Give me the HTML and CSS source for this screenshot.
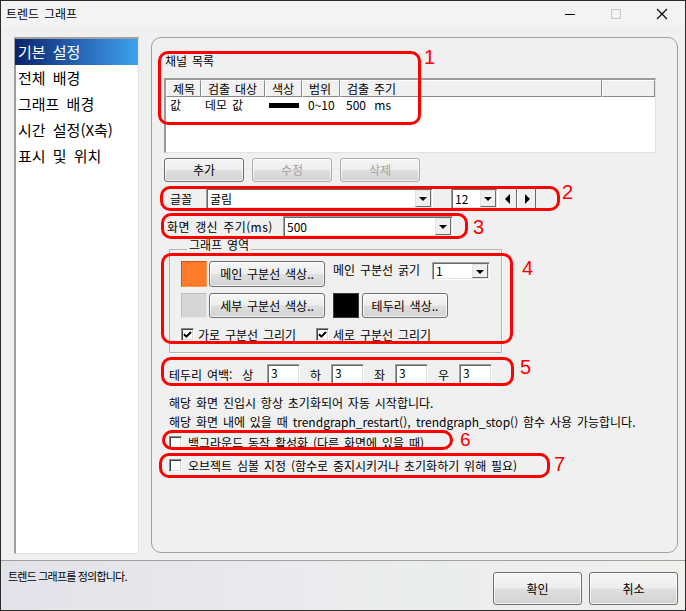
FILE: index.html
```html
<!DOCTYPE html>
<html lang="ko">
<head>
<meta charset="utf-8">
<title>트렌드 그래프</title>
<link rel="stylesheet" href="styles.css">
</head>
<body>
<div class="window">
  <div class="titlebar">
    <span class="title">트렌드 그래프</span>
    <div class="controls">
      <svg class="ctl" width="46" height="25" viewBox="0 0 46 25"><line x1="18" y1="13.5" x2="28" y2="13.5" stroke="#000" stroke-width="1"/></svg>
      <svg class="ctl" width="46" height="25" viewBox="0 0 46 25"><rect x="18.5" y="8.5" width="9" height="9" fill="none" stroke="#c6c6c6" stroke-width="1"/></svg>
      <svg class="ctl" width="46" height="25" viewBox="0 0 46 25"><path d="M18 8 L28 18 M28 8 L18 18" stroke="#000" stroke-width="1.1" fill="none"/></svg>
    </div>
  </div>

  <div class="main">
    <ul class="nav">
      <li class="sel">기본 설정</li>
      <li>전체 배경</li>
      <li>그래프 배경</li>
      <li>시간 설정(X축)</li>
      <li>표시 및 위치</li>
    </ul>

    <div class="panel">
      <div class="section-label">채널 목록</div>
      <div class="listview">
        <div class="lv-head">
          <span class="col c1">제목</span>
          <span class="col c2">검출 대상</span>
          <span class="col c3">색상</span>
          <span class="col c4">범위</span>
          <span class="col c5">검출 주기</span>
          <span class="col c6"></span>
        </div>
        <div class="lv-row">
          <span class="cell c1">값</span>
          <span class="cell c2">데모 값</span>
          <span class="cell c3"><span class="colorbar"></span></span>
          <span class="cell c4 pad2">0~10</span>
          <span class="cell c5 pad2 wide">500 ms</span>
        </div>
      </div>

      <div class="btnrow">
        <button class="btn w80">추가</button>
        <button class="btn w80 disabled">수정</button>
        <button class="btn w80 disabled">삭제</button>
      </div>

      <div class="row row-font">
        <span class="lbl-font">글꼴</span>
        <div class="combo w-font"><span class="combo-text">굴림</span><span class="dd"><i class="tri-down"></i></span></div>
        <div class="combo w-size"><span class="combo-text">12</span><span class="dd"><i class="tri-down"></i></span></div>
        <span class="spin"><i class="tri-left"></i></span>
        <span class="spin"><i class="tri-right"></i></span>
      </div>

      <div class="row row-refresh">
        <span class="lbl-refresh">화면 갱신 주기(ms)</span>
        <div class="combo w-refresh"><span class="combo-text">500</span><span class="dd"><i class="tri-down"></i></span></div>
      </div>

      <fieldset class="group">
        <legend>그래프 영역</legend>
        <div class="g-row g-row1">
          <span class="swatch orange"></span>
          <button class="btn w116 h26">메인 구분선 색상..</button>
          <span class="lbl-thick">메인 구분선 굵기</span>
          <div class="combo w-thick"><span class="combo-text">1</span><span class="dd"><i class="tri-down"></i></span></div>
        </div>
        <div class="g-row g-row2">
          <span class="swatch gray"></span>
          <button class="btn w116 h25">세부 구분선 색상..</button>
          <span class="swatch black"></span>
          <button class="btn w86 h25">테두리 색상..</button>
        </div>
        <div class="g-row g-row3">
          <label class="check"><span class="cb"><svg width="9" height="9" viewBox="0 0 9 9"><path d="M1 4.2 L3.4 6.6 L8 2" stroke="#000" stroke-width="2" fill="none"/></svg></span>가로 구분선 그리기</label>
          <label class="check check2"><span class="cb"><svg width="9" height="9" viewBox="0 0 9 9"><path d="M1 4.2 L3.4 6.6 L8 2" stroke="#000" stroke-width="2" fill="none"/></svg></span>세로 구분선 그리기</label>
        </div>
      </fieldset>

      <div class="row row-margin">
        <span class="lbl-margin">테두리 여백:&nbsp; 상</span>
        <span class="input">3</span>
        <span class="lbl-side">하</span>
        <span class="input">3</span>
        <span class="lbl-side">좌</span>
        <span class="input">3</span>
        <span class="lbl-side">우</span>
        <span class="input">3</span>
      </div>

      <p class="note">해당 화면 진입시 항상 초기화되어 자동 시작합니다.</p>
      <p class="note">해당 화면 내에 있을 때 <span class="code">trendgraph_restart(), trendgraph_stop()</span> 함수 사용 가능합니다.</p>

      <label class="check row-check"><span class="cb"></span>백그라운드 동작 활성화 (다른 화면에 있을 때)</label>
      <label class="check row-check"><span class="cb"></span>오브젝트 심볼 지정 (함수로 중지시키거나 초기화하기 위해 필요)</label>

      <!-- annotation overlays -->
      <div class="mark m1"></div><span class="num n1">1</span>
      <div class="mark m2"></div><span class="num n2">2</span>
      <div class="mark m3"></div><span class="num n3">3</span>
      <div class="mark m4"></div><span class="num n4">4</span>
      <div class="mark m5"></div><span class="num n5">5</span>
      <div class="mark m6"></div><span class="num n6">6</span>
      <div class="mark m7"></div><span class="num n7">7</span>
    </div>
  </div>

  <div class="statusbar">
    <span class="status-text">트렌드 그래프를 정의합니다.</span>
    <div class="dlg-buttons">
      <button class="btn dlg">확인</button>
      <button class="btn dlg">취소</button>
    </div>
  </div>
</div>
</body>
</html>
```

FILE: styles.css
```css
* { box-sizing: border-box; }
html, body { margin: 0; padding: 0; background: #ffffff; }
body {
  font-family: "Noto Sans CJK KR", "Noto Sans", "Liberation Sans", sans-serif;
  font-size: 12px;
  color: #000;
  word-spacing: 1.5px;
}

.window {
  width: 686px;
  height: 611px;
  border: 1px solid #2b2b2b;
  background: #f0f0f0;
  display: flex;
  flex-direction: column;
  overflow: hidden;
}

/* title bar */
.titlebar {
  height: 25px;
  flex: none;
  display: flex;
  align-items: center;
  justify-content: space-between;
  background: #f3f3f3;
  padding-left: 5px;
}
.title { font-size: 12px; line-height: 14px; }
.controls { display: flex; }
.ctl { display: block; }

/* main area */
.main {
  height: 534px;
  flex: none;
  display: flex;
  align-items: flex-start;
  gap: 12px;
  padding: 11px 0 0 13px;
}

.nav {
  list-style: none;
  margin: 0;
  padding: 0;
  width: 125px;
  height: 517px;
  background: #fff;
  border-style: solid;
  border-width: 2px 1px 1px 2px;
  border-color: #a0a0a0 #e3e3e3 #e3e3e3 #a0a0a0;
}
.nav li {
  height: 26px;
  line-height: 26px;
  font-size: 15px;
  padding-left: 2px;
  white-space: nowrap;
  word-spacing: 3px;
}
.nav li.sel {
  margin-left: -1px;
  padding-left: 3px;
  background: linear-gradient(to right, #0a246a, #2a6fc0 60%, #3fa2ec);
  color: #fff;
}

.panel {
  position: relative;
  width: 527px;
  height: 516px;
  border: 1px solid #a0a0a0;
  border-radius: 10px;
  padding: 15px 0 0 12px;
}

.section-label { line-height: 16px; height: 16px; padding-left: 1px; }

/* list view */
.listview {
  margin-top: 9px;
  width: 492px;
  height: 75px;
  background: #fff;
  border-style: solid;
  border-width: 2px 1px 1px 2px;
  border-color: #9a9a9a #e3e3e3 #e3e3e3 #9a9a9a;
}
.lv-head { display: flex; height: 17px; }
.col {
  display: block;
  height: 17px;
  line-height: 15px;
  padding-left: 6px;
  background: #f0f0f0;
  border-style: solid;
  border-width: 1px;
  border-color: #ffffff #8a8a8a #8a8a8a #ffffff;
  white-space: nowrap;
}
.c1 { width: 35px; }
.c2 { width: 64px; }
.c3 { width: 37px; }
.c4 { width: 38px; }
.c5 { width: 262px; }
.c6 { flex: 1; }
.lv-row { display: flex; height: 16px; line-height: 16px; margin-top: 0; }
.cell { display: block; padding-left: 4px; white-space: nowrap; }
.cell.pad2 { padding-left: 6px; }
.cell.wide { word-spacing: 5px; }
.colorbar {
  display: inline-block;
  width: 30px;
  height: 5px;
  background: #000;
  vertical-align: middle;
  margin-top: -2px;
}

/* buttons */
.btn {
  font-family: inherit;
  font-size: 12px;
  word-spacing: 1.5px;
  color: #000;
  padding: 0;
  border: 1px solid #707070;
  border-radius: 3px;
  background: linear-gradient(#f6f6f6 0%, #ededed 48%, #dfdfdf 52%, #d2d2d2 100%);
  box-shadow: inset 0 0 0 1px rgba(255,255,255,0.7);
  line-height: 14px;
}
.btn.disabled { color: #a3a3a3; border-color: #adadad; }
.w80 { width: 80px; height: 24px; }
.w116 { width: 116px; }
.w86 { width: 86px; }
.h26 { height: 26px; }
.h25 { height: 25px; }

.btnrow { display: flex; gap: 8px; margin-top: 5px; }

/* rows */
.row { display: flex; align-items: center; }

.row-font { margin-top: 6px; height: 21px; }
.lbl-font { width: 42px; padding-left: 6px; }
.row-refresh { margin-top: 7px; height: 21px; }
.lbl-refresh { width: 119px; padding-left: 3px; white-space: nowrap; letter-spacing: 0.4px; }

/* combo box */
.combo {
  height: 21px;
  display: flex;
  align-items: center;
  justify-content: space-between;
  background: #fff;
  border-style: solid;
  border-width: 1px;
  border-color: #a0a0a0 #ffffff #ffffff #a0a0a0;
  box-shadow: inset 1px 1px 0 #696969, inset -1px -1px 0 #e3e3e3;
  padding: 1px 1px 1px 3px;
}
.combo-text { line-height: 14px; }
.dd {
  width: 16px;
  height: 17px;
  background: #f0f0f0;
  border-style: solid;
  border-width: 1px;
  border-color: #e3e3e3 #696969 #696969 #e3e3e3;
  display: flex;
  align-items: center;
  justify-content: center;
}
.tri-down {
  display: block;
  width: 0; height: 0;
  border-left: 4px solid transparent;
  border-right: 4px solid transparent;
  border-top: 4px solid #000;
  margin-top: 1px;
}
.w-font { width: 227px; }
.w-size { width: 47px; margin-left: 18px; }
.w-refresh { width: 170px; }
.w-thick { width: 58px; height: 18px; padding-top: 0; padding-bottom: 0; }
.w-thick .dd { height: 14px; }

.spin {
  width: 19px;
  height: 21px;
  background: #f0f0f0;
  border-style: solid;
  border-width: 1px;
  border-color: #ffffff #696969 #696969 #ffffff;
  display: flex;
  align-items: center;
  justify-content: center;
}
.spin:first-of-type { margin-left: 3px; }
.tri-left, .tri-right { display: block; width: 0; height: 0; border-top: 5px solid transparent; border-bottom: 5px solid transparent; }
.tri-left { border-right: 5px solid #000; }
.tri-right { border-left: 5px solid #000; margin-left: 1px; }

/* group box */
.group {
  margin: 2px 0 0 5px;
  width: 333px;
  padding: 0 0 11px 11px;
  border: 1px solid #b4b4b4;
  box-shadow: 1px 1px 0 #ffffff;
  min-width: 0;
}
.group legend {
  padding: 0 2px 8px 2px;
  margin-left: 6px;
  line-height: 12px;
  font-size: 12px;
}
.g-row { display: flex; align-items: center; }
.g-row1 { margin-top: 2px; align-items: flex-start; }
.g-row2 { margin-top: 6px; }
.g-row3 { margin-top: 10px; height: 13px; }

.swatch { display: block; width: 26px; border-style: solid; border-width: 1px; }
.swatch.orange { height: 26px; background: #ff7b2b; border-color: #c65714 #ff9a55 #ff9a55 #c65714; margin-right: 2px; }
.swatch.gray { height: 25px; background: #d6d6d6; border-color: #bdbdbd #e6e6e6 #e6e6e6 #bdbdbd; margin-right: 2px; }
.swatch.black { height: 25px; background: #000; border-color: #3a3a3a; margin: 0 3px 0 8px; }
.lbl-thick { margin: 0 8px 0 8px; line-height: 16px; padding-top: 1px; white-space: nowrap; width: 91px; }
.w-thick { margin-top: 1px; }

.check { display: flex; align-items: center; gap: 4px; white-space: nowrap; }
.check2 { margin-left: 20px; }
.cb {
  width: 13px;
  height: 13px;
  flex: none;
  background: #fff;
  border-style: solid;
  border-width: 1px;
  border-color: #8a8a8a #ffffff #ffffff #8a8a8a;
  box-shadow: inset 1px 1px 0 #404040, inset -1px -1px 0 #d8d8d8;
  display: flex;
  align-items: center;
  justify-content: center;
}
.cb svg { display: block; }

/* margins row */
.row-margin { margin-top: 11px; height: 21px; }
.lbl-margin { width: 103px; padding-left: 5px; white-space: nowrap; }
.lbl-side { width: 12px; margin: 0 9px 0 10px; }
.input {
  width: 33px;
  height: 21px;
  background: #fff;
  border-style: solid;
  border-width: 1px;
  border-color: #a0a0a0 #ffffff #ffffff #a0a0a0;
  box-shadow: inset 1px 1px 0 #696969, inset -1px -1px 0 #e3e3e3;
  padding: 1px 0 0 3px;
  line-height: 13px;
}

.note { margin: 0 0 0 5px; line-height: 19px; white-space: nowrap; }
.note:first-of-type { margin-top: 8px; }
.code { word-spacing: 2px; }
.row-check { height: 23px; margin-left: 5px; gap: 6px; }

/* annotation overlays */
.mark {
  position: absolute;
  border: 3px solid #ff0000;
  border-radius: 10px;
  pointer-events: none;
}
.m1 { left: 6px;  top: 13px;  width: 263px; height: 74px; }
.m2 { left: 8px;  top: 148px; width: 400px; height: 25px; }
.m3 { left: 9px;  top: 175px; width: 307px; height: 26px; }
.m4 { left: 9px;  top: 215px; width: 352px; height: 91px; }
.m5 { left: 9px;  top: 319px; width: 353px; height: 29px; }
.m6 { left: 10px; top: 392px; width: 291px; height: 20px; }
.m7 { left: 7px;  top: 415px; width: 391px; height: 25px; }

.num {
  position: absolute;
  font-family: "Liberation Sans", sans-serif;
  font-size: 20px;
  line-height: 16px;
  color: #ff0000;
}
.n1 { left: 272px; top: 11px; }
.n2 { left: 410px; top: 146px; }
.n3 { left: 321px; top: 181px; }
.n4 { left: 370px; top: 222px; }
.n5 { left: 368px; top: 321px; }
.n6 { left: 308px; top: 394px; font-size: 19px; }
.n7 { left: 402px; top: 418px; }

/* status bar */
.statusbar {
  flex: 1;
  display: flex;
  justify-content: space-between;
  align-items: flex-start;
  border-top: 1px solid #a0a0a0;
  background: linear-gradient(to right, #e2e3ea, #eaecee 50%, #eef1ec);
  padding: 8px 7px 0 7px;
}
.status-text { font-size: 11px; line-height: 14px; letter-spacing: -0.8px; word-spacing: 0; }
.dlg-buttons { display: flex; gap: 7px; margin-top: 3px; }
.btn.dlg { width: 89px; height: 33px; }
```
